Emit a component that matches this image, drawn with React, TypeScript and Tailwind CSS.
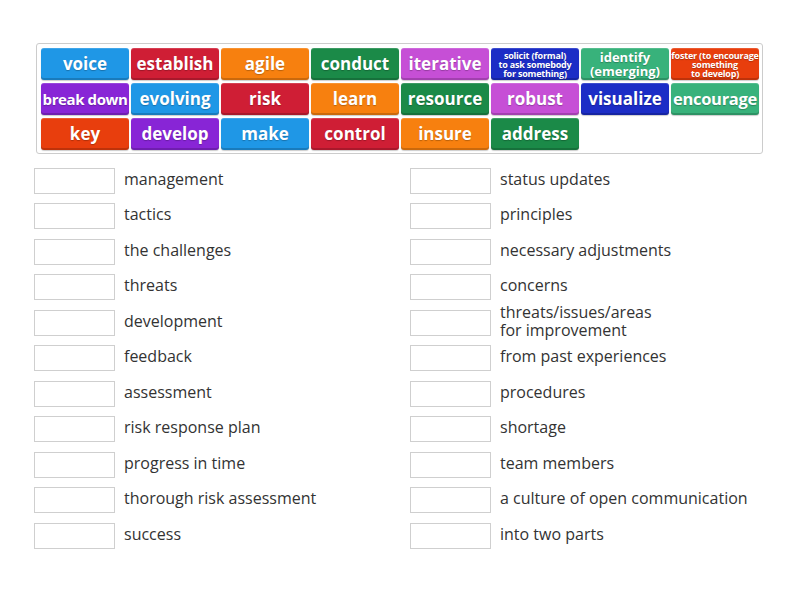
import React from "react";

type Tile = { t: string; c: string; size?: "big" | "mid" | "small" };

const C = {
  blue: "bg-[#1f97e6]",
  red: "bg-[#cf1e35]",
  orange: "bg-[#f7800f]",
  green: "bg-[#1b8a48]",
  magenta: "bg-[#c64fd6]",
  navy: "bg-[#1c2dc6]",
  teal: "bg-[#38b27b]",
  redor: "bg-[#e83e0d]",
  purple: "bg-[#8825d6]",
};

const tiles: Tile[] = [
  { t: "voice", c: C.blue },
  { t: "establish", c: C.red },
  { t: "agile", c: C.orange },
  { t: "conduct", c: C.green },
  { t: "iterative", c: C.magenta },
  { t: "solicit (formal)\nto ask somebody\nfor something)", c: C.navy, size: "small" },
  { t: "identify\n(emerging)", c: C.teal, size: "mid" },
  { t: "foster (to encourage\nsomething\nto develop)", c: C.redor, size: "small" },
  { t: "break down", c: C.purple },
  { t: "evolving", c: C.blue },
  { t: "risk", c: C.red },
  { t: "learn", c: C.orange },
  { t: "resource", c: C.green },
  { t: "robust", c: C.magenta },
  { t: "visualize", c: C.navy },
  { t: "encourage", c: C.teal },
  { t: "key", c: C.redor },
  { t: "develop", c: C.purple },
  { t: "make", c: C.blue },
  { t: "control", c: C.red },
  { t: "insure", c: C.orange },
  { t: "address", c: C.green },
];

const left = [
  "management",
  "tactics",
  "the challenges",
  "threats",
  "development",
  "feedback",
  "assessment",
  "risk response plan",
  "progress in time",
  "thorough risk assessment",
  "success",
];

const right = [
  "status updates",
  "principles",
  "necessary adjustments",
  "concerns",
  "threats/issues/areas\nfor improvement",
  "from past experiences",
  "procedures",
  "shortage",
  "team members",
  "a culture of open communication",
  "into two parts",
];

function TileBox({ tile }: { tile: Tile }) {
  const sizeCls =
    tile.size === "small"
      ? "text-[9px] leading-[9px] tracking-[-0.2px]"
      : tile.size === "mid"
      ? "text-[13px] leading-[14px]"
      : tile.t === "break down"
      ? "text-[15px] leading-[18px] tracking-[-0.4px]"
      : tile.t === "encourage"
      ? "text-[16.5px] leading-[18px] tracking-[-0.3px]"
      : "text-[17px] leading-[18px]";
  return (
    <div
      className={`${tile.c} h-[32px] rounded-[3px] flex items-center justify-center text-center text-white font-bold whitespace-pre-line shadow-[inset_0_-2px_0_rgba(0,0,0,0.18),inset_0_1px_0_rgba(255,255,255,0.15),0_1px_1px_rgba(0,0,0,0.2)] [text-shadow:0_1px_1px_rgba(0,0,0,0.25)] ${sizeCls}`}
    >
      {tile.t}
    </div>
  );
}

function Row({ text }: { text: string }) {
  return (
    <div className="h-[35.5px] flex items-center">
      <div className="w-[81px] h-[26px] border border-[#cfcfcf] bg-white shrink-0" />
      <div className="ml-[9px] pb-[4px] text-[16px] leading-[18px] text-[#333] whitespace-pre-line">{text}</div>
    </div>
  );
}

export default function App() {
  return (
    <div
      className="w-[800px] h-[600px] bg-white relative"
      style={{ fontFamily: '"Open Sans", "Noto Sans", sans-serif' }}
    >
      <div className="pt-[43px] pl-[36px]">
        <div className="w-[727px] border border-[#cccccc] rounded-[3px] p-[4px] pb-[3px]">
          <div className="grid grid-cols-[repeat(8,88px)] gap-x-[2px] gap-y-[3px]">
            {tiles.map((t, i) => (
              <TileBox key={i} tile={t} />
            ))}
          </div>
        </div>
      </div>
      <div className="pl-[34px] pt-[9px] grid grid-cols-[376px_376px]">
        <div className="flex flex-col">
          {left.map((t, i) => (
            <Row key={i} text={t} />
          ))}
        </div>
        <div className="flex flex-col">
          {right.map((t, i) => (
            <Row key={i} text={t} />
          ))}
        </div>
      </div>
    </div>
  );
}
